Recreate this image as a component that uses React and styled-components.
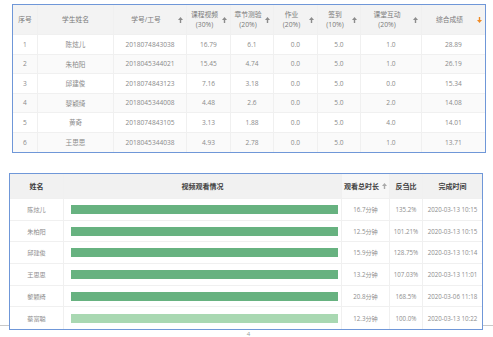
import React from "react";
import styled, { createGlobalStyle } from "styled-components";

const Global = createGlobalStyle`
  html, body { margin: 0; padding: 0; background: #fff; }
  body { font-family: "Open Sans", "Noto Sans CJK SC", sans-serif; }
`;

const Page = styled.div`
  width: 493px;
  height: 337px;
  overflow: hidden;
  position: relative;
  padding-top: 4px;
  box-sizing: border-box;
`;

const ScoreTable = styled.div`
  margin-left: 12px;
  width: 474px;
  border: 1px solid #6f97d8;
  box-sizing: border-box;
  background: #fff;
`;

const scoreCols = "25px 76px 73px 44px 43px 44px 43px 61px 1fr";
const videoCols = "54px 278px 48px 33px 1fr";

const Row = styled.div`
  display: grid;
  grid-template-columns: ${(p) => p.$cols};
  height: ${(p) => p.$h}px;
  background: ${(p) => p.$bg || "#fff"};
  border-bottom: ${(p) => (p.$last ? "none" : "1px solid #f0f0f0")};
  box-sizing: border-box;
`;

const Cell = styled.div`
  display: flex;
  align-items: center;
  justify-content: center;
  border-right: 1px solid #f0f0f0;
  font-size: 6.6px;
  color: #8a8a8a;
  white-space: nowrap;
  background: ${(p) => p.$bg || "transparent"};
  &:last-child { border-right: none; }
`;

const HeadCell = styled(Cell)`
  color: #7a7a7a;
  font-size: 6.8px;
  line-height: 10px;
  padding-right: ${(p) => (p.$sort ? "3px" : "0")};
`;

const HeadLabel = styled.div`
  flex: 1;
  text-align: center;
  white-space: pre-line;
`;

const VideoTable = styled.div`
  margin: 0 0 0 9px;
  width: 474px;
  border: 1px solid #6f97d8;
  box-sizing: border-box;
  background: #fff;
  position: relative;
  z-index: 1;
`;

const VideoHead = styled(Cell)`
  color: #3f3f3f;
  font-weight: 700;
  font-size: 7px;
  gap: 3px;
`;

const VideoCell = styled(Cell)`
  font-size: 6.2px;
  color: #8d8d8d;
`;

const BarCell = styled(Cell)`
  justify-content: stretch;
  padding: 0 3px 0 7px;
`;

const Bar = styled.div`
  flex: 1;
  height: 9px;
  background: ${(p) => (p.$light ? "#a9d8b2" : "#67b280")};
`;

const Section = styled.div`
  position: relative;
  margin-top: 20px;
  &::before {
    content: "";
    position: absolute;
    left: 0;
    right: 0;
    top: 152px;
    border-top: 1px solid #c8c8c8;
  }
`;

const PageNo = styled.div`
  text-align: center;
  font-size: 6px;
  color: #9a9a9a;
  line-height: 8px;
  margin-top: 0px;
  padding-left: 4px;
`;

function SortArrow({ down, light }) {
  const c = down ? "#f08a24" : light ? "#aaaaaa" : "#8c8c8c";
  return (
    <svg width="5" height="6" viewBox="0 0 5 6" style={{ flex: "none" }}>
      {down ? (
        <>
          <rect x="1.8" y="0" width="1.4" height="3.4" fill={c} />
          <polygon points="0,3 5,3 2.5,6" fill={c} />
        </>
      ) : (
        <>
          <polygon points="2.5,0 5,3 0,3" fill={c} />
          <rect x="1.8" y="2.6" width="1.4" height="3.4" fill={c} />
        </>
      )}
    </svg>
  );
}

const scoreHead = [
  { t: "序号" },
  { t: "学生姓名" },
  { t: "学号/工号", s: 1 },
  { t: "课程视频\n(30%)", s: 1 },
  { t: "章节测验\n(20%)", s: 1 },
  { t: "作业\n(20%)", s: 1 },
  { t: "签到\n(10%)", s: 1 },
  { t: "课堂互动\n(20%)", s: 1 },
  { t: "综合成绩", s: 2 },
];

const scoreRows = [
  ["1", "陈炫儿", "2018074843038", "16.79", "6.1", "0.0", "5.0", "1.0", "28.89"],
  ["2", "朱柏阳", "2018045344021", "15.45", "4.74", "0.0", "5.0", "1.0", "26.19"],
  ["3", "邱建俊", "2018074843123", "7.16", "3.18", "0.0", "5.0", "0.0", "15.34"],
  ["4", "黎颖绮", "2018045344008", "4.48", "2.6", "0.0", "5.0", "2.0", "14.08"],
  ["5", "黄奇", "2018074843105", "3.13", "1.88", "0.0", "5.0", "4.0", "14.01"],
  ["6", "王思思", "2018045344038", "4.93", "2.78", "0.0", "5.0", "1.0", "13.71"],
];

const videoRows = [
  ["陈炫儿", "16.7分钟", "135.2%", "2020-03-13 10:15"],
  ["朱柏阳", "12.5分钟", "101.21%", "2020-03-13 10:15"],
  ["邱建俊", "15.9分钟", "128.75%", "2020-03-13 10:14"],
  ["王思思", "13.2分钟", "107.03%", "2020-03-13 11:01"],
  ["黎颖绮", "20.8分钟", "168.5%", "2020-03-06 11:18"],
  ["蔡富聪", "12.3分钟", "100.0%", "2020-03-13 10:22", true],
];

export default function App() {
  return (
    <>
      <Global />
      <Page>
        <ScoreTable>
          <Row $cols={scoreCols} $h={30} $bg="#f3f3f3">
            {scoreHead.map((h, i) => (
              <HeadCell key={i} $sort={h.s}>
                <HeadLabel>{h.t}</HeadLabel>
                {h.s ? <SortArrow down={h.s === 2} /> : null}
              </HeadCell>
            ))}
          </Row>
          {scoreRows.map((r, i) => (
            <Row
              key={i}
              $cols={scoreCols}
              $h={19.5}
              $bg={i % 2 ? "#fafafa" : "#fff"}
              $last={i === scoreRows.length - 1}
            >
              {r.map((v, j) => (
                <Cell key={j}>{v}</Cell>
              ))}
            </Row>
          ))}
        </ScoreTable>

        <Section>
          <VideoTable>
            <Row $cols={videoCols} $h={25} $bg="#f1f1f1">
              <VideoHead>姓名</VideoHead>
              <VideoHead>视频观看情况</VideoHead>
              <VideoHead $bg="#f7f7f7">
                观看总时长
                <SortArrow light />
              </VideoHead>
              <VideoHead>反刍比</VideoHead>
              <VideoHead>完成时间</VideoHead>
            </Row>
            {videoRows.map((r, i) => (
              <Row
                key={i}
                $cols={videoCols}
                $h={21.7}
                $last={i === videoRows.length - 1}
              >
                <VideoCell>{r[0]}</VideoCell>
                <BarCell>
                  <Bar $light={r[4]} />
                </BarCell>
                <VideoCell>{r[1]}</VideoCell>
                <VideoCell>{r[2]}</VideoCell>
                <VideoCell>{r[3]}</VideoCell>
              </Row>
            ))}
          </VideoTable>
          <PageNo>4</PageNo>
        </Section>
      </Page>
    </>
  );
}
